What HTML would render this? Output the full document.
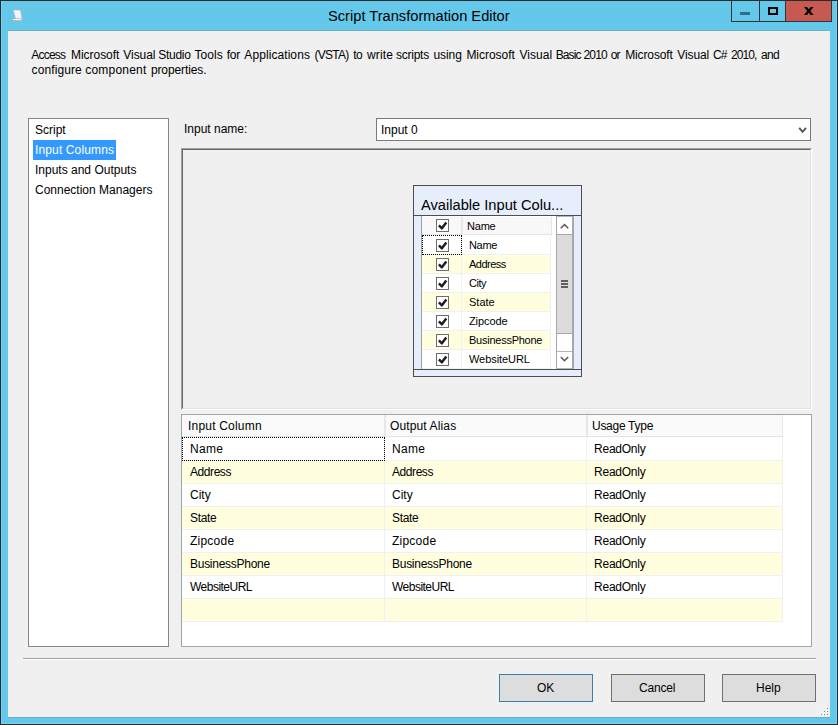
<!DOCTYPE html>
<html><head><meta charset="utf-8">
<style>
*{margin:0;padding:0;box-sizing:border-box}
html,body{width:838px;height:725px;overflow:hidden;background:#64c7e9}
body{position:relative;font-family:"Liberation Sans",sans-serif;font-size:12px;color:#000}
.a{position:absolute}
.t{position:absolute;white-space:nowrap;line-height:normal;font-size:12px}
.s{position:absolute;white-space:nowrap;line-height:normal;font-size:11px}
</style></head><body>
<!-- window frame -->
<div class="a" style="left:0;top:0;width:838px;height:725px;border:1px solid #2b2b2b;background:#64c8ea"></div>
<div class="a" style="left:1px;top:723px;width:836px;height:1px;background:#6fd6f7"></div>
<div class="a" style="left:836px;top:1px;width:1px;height:723px;background:#6fd6f7"></div>
<div class="a" style="left:1px;top:1px;width:1px;height:723px;background:#6fd6f7"></div>
<!-- title icon -->
<svg class="a" style="left:0;top:0" width="30" height="30">
<path d="M13,10 L20.4,10 C21,12.5 21.6,16.5 22.3,20.4 L16,20.4 L15.4,18.6 C14.6,15.2 13.9,12.4 13,10 Z" fill="#f2f2f7" stroke="#a8a8bc" stroke-width="0.5"/>
<path d="M20.2,10 C21,9.5 22.6,9.7 22.8,10.6 C22.8,11.6 21.4,11.8 20.6,11.4 Z" fill="#aeaebe"/>
<rect x="12.6" y="18.8" width="8.6" height="1.8" fill="#f6f6fa" stroke="#9c9cae" stroke-width="0.5"/>
</svg>
<div class="t" style="left:328px;top:8px;font-size:14.67px;color:#000">Script Transformation Editor</div>
<!-- caption buttons -->
<div class="a" style="left:731px;top:0;width:29px;height:22px;border:1px solid #333;border-top:0"></div>
<div class="a" style="left:740px;top:12px;width:10px;height:3px;background:#2f6f85"></div>
<div class="a" style="left:759px;top:0;width:27px;height:22px;border:1px solid #333;border-top:0;border-left:0"></div>
<div class="a" style="left:768px;top:7px;width:10px;height:8px;border:2px solid #000"></div>
<div class="a" style="left:785px;top:1px;width:47px;height:21px;border:1px solid #333;border-top:0;background:#c75a50"></div>
<svg class="a" style="left:800px;top:4px" width="18" height="14"><polygon points="4,3 7,3 13.6,11 10.6,11" fill="#000"/><polygon points="10.6,3 13.6,3 7,11 4,11" fill="#000"/></svg>
<!-- client -->
<div class="a" style="left:8px;top:30px;width:822px;height:1px;background:#6aaec4"></div>
<div class="a" style="left:8px;top:717px;width:822px;height:1px;background:#6aaec4"></div>
<div class="a" style="left:8px;top:31px;width:822px;height:686px;background:#f0f0f0"></div>

<div class="t" style="left:31.2px;top:48px;letter-spacing:-0.76px">Access</div>
<div class="t" style="left:71.0px;top:48px;letter-spacing:-0.04px">Microsoft</div>
<div class="t" style="left:123.3px;top:48px;letter-spacing:-0.06px">Visual</div>
<div class="t" style="left:158.3px;top:48px;letter-spacing:-0.28px">Studio</div>
<div class="t" style="left:194.4px;top:48px;letter-spacing:0.10px">Tools</div>
<div class="t" style="left:226.7px;top:48px;letter-spacing:-0.20px">for</div>
<div class="t" style="left:244.3px;top:48px;letter-spacing:0.08px">Applications</div>
<div class="t" style="left:314.5px;top:48px;letter-spacing:-0.72px">(VSTA)</div>
<div class="t" style="left:353.2px;top:48px;letter-spacing:-0.60px">to</div>
<div class="t" style="left:366.9px;top:48px;letter-spacing:0.20px">write</div>
<div class="t" style="left:396.1px;top:48px;letter-spacing:-0.27px">scripts</div>
<div class="t" style="left:433.4px;top:48px;letter-spacing:-0.05px">using</div>
<div class="t" style="left:466.4px;top:48px;letter-spacing:-0.02px">Microsoft</div>
<div class="t" style="left:519.5px;top:48px;letter-spacing:0.04px">Visual</div>
<div class="t" style="left:555.7px;top:48px;letter-spacing:-0.90px">Basic</div>
<div class="t" style="left:583.6px;top:48px;letter-spacing:-0.90px">2010</div>
<div class="t" style="left:610.8px;top:48px;letter-spacing:-0.90px">or</div>
<div class="t" style="left:625.2px;top:48px;letter-spacing:-0.12px">Microsoft</div>
<div class="t" style="left:677.3px;top:48px;letter-spacing:-0.12px">Visual</div>
<div class="t" style="left:713.0px;top:48px;letter-spacing:-0.90px">C#</div>
<div class="t" style="left:730.9px;top:48px;letter-spacing:-0.90px">2010,</div>
<div class="t" style="left:761.0px;top:48px;letter-spacing:-0.70px">and</div>
<div class="t" style="left:31.6px;top:63px;letter-spacing:0.09px">configure</div>
<div class="t" style="left:85.3px;top:63px;letter-spacing:0.20px">component</div>
<div class="t" style="left:150.9px;top:63px;letter-spacing:-0.11px">properties.</div>

<!-- left list -->
<div class="a" style="left:28px;top:118px;width:141px;height:529px;border:1px solid #828790;background:#fff"></div>
<div class="t" style="left:35px;top:123px">Script</div>
<div class="a" style="left:33px;top:140px;width:83px;height:20px;background:#3399ff"></div>
<div class="t" style="left:35px;top:143px;color:#fff;letter-spacing:0.13px">Input Columns</div>
<div class="t" style="left:35px;top:163px">Inputs and Outputs</div>
<div class="t" style="left:35px;top:183px">Connection Managers</div>

<!-- input name -->
<div class="t" style="left:184px;top:122px">Input name:</div>
<div class="a" style="left:376px;top:118px;width:435px;height:23px;border:1px solid #7a7a7a;background:#fff"></div>
<div class="t" style="left:381px;top:123px">Input 0</div>
<svg class="a" style="left:797px;top:125px" width="12" height="10"><path d="M2.2,2.8 L5.6,6.8 L9,2.8" stroke="#555" stroke-width="1.9" fill="none"/></svg>

<!-- upper panel -->
<div class="a" style="left:181px;top:148px;width:631px;height:262px;background:#f0f0f0;border-style:solid;border-width:1px;border-color:#a0a0a0 #fff #fff #a0a0a0"></div>
<div class="a" style="left:182px;top:149px;width:629px;height:260px;border-style:solid;border-width:1px;border-color:#696969 #e3e3e3 #e3e3e3 #696969"></div>

<!-- available input columns box -->
<div class="a" style="left:413px;top:185px;width:169px;height:192px;border:1px solid #4d4d4d;background:#e6eefc"></div>
<div class="t" style="left:421px;top:197px;font-size:14.67px;color:#000">Available Input Colu...</div>
<div class="a" style="left:413px;top:215px;width:169px;height:1px;background:#4d4d4d"></div>
<div class="a" style="left:413px;top:369px;width:169px;height:1px;background:#4d4d4d"></div>
<div class="a" style="left:421px;top:216px;width:136px;height:153px;background:#fff;border-left:1px solid #a0a0a0"></div>
<div class="a" style="left:422px;top:217px;width:40px;height:18px;background:#f8f8f8;border-right:1px solid #e6e6e6;border-bottom:1px solid #e6e6e6"></div>
<div class="a" style="left:462px;top:217px;width:90px;height:18px;background:#f8f8f8;border-left:1px solid #ececec;border-right:1px solid #e6e6e6;border-bottom:1px solid #e6e6e6"></div>
<div class="s" style="left:467px;top:220px;letter-spacing:-0.2px">Name</div>
<div class="a" style="left:436px;top:219px;width:13px;height:13px;border:1px solid #6d6d6d;background:#fff"></div><svg class="a" style="left:436px;top:219px" width="13" height="13"><path d="M2.9,6.3 L5.9,9.3 L10.3,3.6" stroke="#1e1e1e" stroke-width="2.5" stroke-linejoin="round" fill="none"/></svg>
<div class="a" style="left:422px;top:235px;width:39px;height:19px;background:#fff"></div>
<div class="a" style="left:462px;top:235px;width:88px;height:19px;background:#fff"></div>
<div class="a" style="left:422px;top:254px;width:129px;height:1px;background:#f0f0f0"></div>
<div class="a" style="left:436px;top:239px;width:13px;height:13px;border:1px solid #6d6d6d;background:#fff"></div><svg class="a" style="left:436px;top:239px" width="13" height="13"><path d="M2.9,6.3 L5.9,9.3 L10.3,3.6" stroke="#1e1e1e" stroke-width="2.5" stroke-linejoin="round" fill="none"/></svg>
<div class="s" style="left:469px;top:239px;letter-spacing:-0.33px">Name</div>
<div class="a" style="left:422px;top:255px;width:39px;height:18px;background:#ffffe0"></div>
<div class="a" style="left:462px;top:255px;width:88px;height:18px;background:#ffffe0"></div>
<div class="a" style="left:422px;top:273px;width:129px;height:1px;background:#f0f0f0"></div>
<div class="a" style="left:436px;top:258px;width:13px;height:13px;border:1px solid #6d6d6d;background:#fff"></div><svg class="a" style="left:436px;top:258px" width="13" height="13"><path d="M2.9,6.3 L5.9,9.3 L10.3,3.6" stroke="#1e1e1e" stroke-width="2.5" stroke-linejoin="round" fill="none"/></svg>
<div class="s" style="left:469px;top:258px;letter-spacing:-0.5px">Address</div>
<div class="a" style="left:422px;top:274px;width:39px;height:18px;background:#fff"></div>
<div class="a" style="left:462px;top:274px;width:88px;height:18px;background:#fff"></div>
<div class="a" style="left:422px;top:292px;width:129px;height:1px;background:#f0f0f0"></div>
<div class="a" style="left:436px;top:277px;width:13px;height:13px;border:1px solid #6d6d6d;background:#fff"></div><svg class="a" style="left:436px;top:277px" width="13" height="13"><path d="M2.9,6.3 L5.9,9.3 L10.3,3.6" stroke="#1e1e1e" stroke-width="2.5" stroke-linejoin="round" fill="none"/></svg>
<div class="s" style="left:469px;top:277px;letter-spacing:-0.5px">City</div>
<div class="a" style="left:422px;top:293px;width:39px;height:18px;background:#ffffe0"></div>
<div class="a" style="left:462px;top:293px;width:88px;height:18px;background:#ffffe0"></div>
<div class="a" style="left:422px;top:311px;width:129px;height:1px;background:#f0f0f0"></div>
<div class="a" style="left:436px;top:296px;width:13px;height:13px;border:1px solid #6d6d6d;background:#fff"></div><svg class="a" style="left:436px;top:296px" width="13" height="13"><path d="M2.9,6.3 L5.9,9.3 L10.3,3.6" stroke="#1e1e1e" stroke-width="2.5" stroke-linejoin="round" fill="none"/></svg>
<div class="s" style="left:469px;top:296px;letter-spacing:0px">State</div>
<div class="a" style="left:422px;top:312px;width:39px;height:18px;background:#fff"></div>
<div class="a" style="left:462px;top:312px;width:88px;height:18px;background:#fff"></div>
<div class="a" style="left:422px;top:330px;width:129px;height:1px;background:#f0f0f0"></div>
<div class="a" style="left:436px;top:315px;width:13px;height:13px;border:1px solid #6d6d6d;background:#fff"></div><svg class="a" style="left:436px;top:315px" width="13" height="13"><path d="M2.9,6.3 L5.9,9.3 L10.3,3.6" stroke="#1e1e1e" stroke-width="2.5" stroke-linejoin="round" fill="none"/></svg>
<div class="s" style="left:469px;top:315px;letter-spacing:-0.1px">Zipcode</div>
<div class="a" style="left:422px;top:331px;width:39px;height:18px;background:#ffffe0"></div>
<div class="a" style="left:462px;top:331px;width:88px;height:18px;background:#ffffe0"></div>
<div class="a" style="left:422px;top:349px;width:129px;height:1px;background:#f0f0f0"></div>
<div class="a" style="left:436px;top:334px;width:13px;height:13px;border:1px solid #6d6d6d;background:#fff"></div><svg class="a" style="left:436px;top:334px" width="13" height="13"><path d="M2.9,6.3 L5.9,9.3 L10.3,3.6" stroke="#1e1e1e" stroke-width="2.5" stroke-linejoin="round" fill="none"/></svg>
<div class="s" style="left:469px;top:334px;letter-spacing:-0.25px">BusinessPhone</div>
<div class="a" style="left:422px;top:350px;width:39px;height:18px;background:#fff"></div>
<div class="a" style="left:462px;top:350px;width:88px;height:18px;background:#fff"></div>
<div class="a" style="left:422px;top:368px;width:129px;height:1px;background:#f0f0f0"></div>
<div class="a" style="left:436px;top:353px;width:13px;height:13px;border:1px solid #6d6d6d;background:#fff"></div><svg class="a" style="left:436px;top:353px" width="13" height="13"><path d="M2.9,6.3 L5.9,9.3 L10.3,3.6" stroke="#1e1e1e" stroke-width="2.5" stroke-linejoin="round" fill="none"/></svg>
<div class="s" style="left:469px;top:353px;letter-spacing:-0.07px">WebsiteURL</div>
<div class="a" style="left:461px;top:235px;width:1px;height:134px;background:#f0f0f0"></div>
<div class="a" style="left:550px;top:235px;width:1px;height:134px;background:#f0f0f0"></div>
<div class="a" style="left:422px;top:235px;width:40px;height:20px;border:1px dotted #000"></div>
<div class="a" style="left:556px;top:216px;width:18px;height:153px;background:#fff;border-left:1px solid #a8a8a8;border-top:1px solid #b4b4b4;border-right:2px solid #a8a8a8;border-bottom:1px solid #b4b4b4"></div>
<svg class="a" style="left:557px;top:217px" width="15" height="16"><path d="M3.8,11.2 L7.5,7.5 L11.2,11.2" stroke="#555" stroke-width="1.5" fill="none"/></svg>
<div class="a" style="left:557px;top:234px;width:15px;height:100px;background:#dcdcdc;border-top:1px solid #a8a8a8;border-bottom:1px solid #a8a8a8"></div>
<div class="a" style="left:561px;top:280px;width:7px;height:2px;background:#606060"></div>
<div class="a" style="left:561px;top:283px;width:7px;height:2px;background:#606060"></div>
<div class="a" style="left:561px;top:286px;width:7px;height:2px;background:#606060"></div>
<div class="a" style="left:557px;top:351px;width:15px;height:1px;background:#b4b4b4"></div>
<svg class="a" style="left:557px;top:352px" width="15" height="16"><path d="M3.8,5 L7.5,8.7 L11.2,5" stroke="#555" stroke-width="1.5" fill="none"/></svg>
<!-- lower grid -->
<div class="a" style="left:181px;top:414px;width:631px;height:233px;border:1px solid #a0a4ac;background:#fff"></div>
<div class="a" style="left:182px;top:415px;width:601px;height:22px;background:#fafafa;border-bottom:1px solid #e3e3e3"></div>
<div class="a" style="left:384px;top:415px;width:2px;height:21px;background:#e8e8e8"></div>
<div class="a" style="left:586px;top:415px;width:2px;height:21px;background:#e8e8e8"></div>
<div class="a" style="left:782px;top:415px;width:1px;height:21px;background:#e8e8e8"></div>
<div class="t" style="left:188px;top:419px;letter-spacing:0.2px">Input Column</div>
<div class="t" style="left:390px;top:419px;letter-spacing:0.13px">Output Alias</div>
<div class="t" style="left:592px;top:419px;letter-spacing:-0.28px">Usage Type</div>
<div class="a" style="left:182px;top:437px;width:601px;height:23px;background:#fff"></div>
<div class="a" style="left:182px;top:460px;width:601px;height:1px;background:#f0f0f0"></div>
<div class="t" style="left:190px;top:442px;letter-spacing:0.3px">Name</div>
<div class="t" style="left:392px;top:442px;letter-spacing:0.3px">Name</div>
<div class="t" style="left:594px;top:442px;letter-spacing:-0.23px">ReadOnly</div>
<div class="a" style="left:182px;top:461px;width:601px;height:22px;background:#ffffe0"></div>
<div class="a" style="left:182px;top:483px;width:601px;height:1px;background:#f0f0f0"></div>
<div class="t" style="left:190px;top:465px;letter-spacing:-0.43px">Address</div>
<div class="t" style="left:392px;top:465px;letter-spacing:-0.43px">Address</div>
<div class="t" style="left:594px;top:465px;letter-spacing:-0.23px">ReadOnly</div>
<div class="a" style="left:182px;top:484px;width:601px;height:22px;background:#fff"></div>
<div class="a" style="left:182px;top:506px;width:601px;height:1px;background:#f0f0f0"></div>
<div class="t" style="left:190px;top:488px;letter-spacing:0px">City</div>
<div class="t" style="left:392px;top:488px;letter-spacing:0px">City</div>
<div class="t" style="left:594px;top:488px;letter-spacing:-0.23px">ReadOnly</div>
<div class="a" style="left:182px;top:507px;width:601px;height:22px;background:#ffffe0"></div>
<div class="a" style="left:182px;top:529px;width:601px;height:1px;background:#f0f0f0"></div>
<div class="t" style="left:190px;top:511px;letter-spacing:-0.35px">State</div>
<div class="t" style="left:392px;top:511px;letter-spacing:-0.35px">State</div>
<div class="t" style="left:594px;top:511px;letter-spacing:-0.23px">ReadOnly</div>
<div class="a" style="left:182px;top:530px;width:601px;height:22px;background:#fff"></div>
<div class="a" style="left:182px;top:552px;width:601px;height:1px;background:#f0f0f0"></div>
<div class="t" style="left:190px;top:534px;letter-spacing:0.23px">Zipcode</div>
<div class="t" style="left:392px;top:534px;letter-spacing:0.23px">Zipcode</div>
<div class="t" style="left:594px;top:534px;letter-spacing:-0.23px">ReadOnly</div>
<div class="a" style="left:182px;top:553px;width:601px;height:22px;background:#ffffe0"></div>
<div class="a" style="left:182px;top:575px;width:601px;height:1px;background:#f0f0f0"></div>
<div class="t" style="left:190px;top:557px;letter-spacing:-0.27px">BusinessPhone</div>
<div class="t" style="left:392px;top:557px;letter-spacing:-0.27px">BusinessPhone</div>
<div class="t" style="left:594px;top:557px;letter-spacing:-0.23px">ReadOnly</div>
<div class="a" style="left:182px;top:576px;width:601px;height:22px;background:#fff"></div>
<div class="a" style="left:182px;top:598px;width:601px;height:1px;background:#f0f0f0"></div>
<div class="t" style="left:190px;top:580px;letter-spacing:-0.52px">WebsiteURL</div>
<div class="t" style="left:392px;top:580px;letter-spacing:-0.52px">WebsiteURL</div>
<div class="t" style="left:594px;top:580px;letter-spacing:-0.23px">ReadOnly</div>
<div class="a" style="left:182px;top:599px;width:601px;height:22px;background:#ffffe0"></div>
<div class="a" style="left:182px;top:621px;width:601px;height:1px;background:#f0f0f0"></div>
<div class="a" style="left:384px;top:437px;width:1px;height:185px;background:#f0f0f0"></div>
<div class="a" style="left:586px;top:437px;width:1px;height:185px;background:#f0f0f0"></div>
<div class="a" style="left:782px;top:437px;width:1px;height:185px;background:#f0f0f0"></div>
<div class="a" style="left:182px;top:437px;width:203px;height:24px;border:1px dotted #000"></div>

<!-- separator -->
<div class="a" style="left:23px;top:658px;width:793px;height:1px;background:#a0a0a0"></div>
<div class="a" style="left:23px;top:659px;width:793px;height:1px;background:#fff"></div>

<!-- buttons -->
<div class="a" style="left:499px;top:674px;width:94px;height:28px;border:1px solid #3c7fb1;background:#dddddd"></div>
<div class="t" style="left:537px;top:681px">OK</div>
<div class="a" style="left:611px;top:674px;width:94px;height:28px;border:1px solid #707070;background:#dddddd"></div>
<div class="t" style="left:639px;top:681px;letter-spacing:-0.2px">Cancel</div>
<div class="a" style="left:722px;top:674px;width:94px;height:28px;border:1px solid #707070;background:#dddddd"></div>
<div class="t" style="left:756px;top:681px">Help</div>

<!-- grip -->
<div class="a" style="left:826px;top:707px;width:1px;height:1px;background:#fff"></div><div class="a" style="left:827px;top:708px;width:1px;height:1px;background:#808080"></div>
<div class="a" style="left:823px;top:710px;width:1px;height:1px;background:#fff"></div><div class="a" style="left:824px;top:711px;width:1px;height:1px;background:#808080"></div>
<div class="a" style="left:826px;top:710px;width:1px;height:1px;background:#fff"></div><div class="a" style="left:827px;top:711px;width:1px;height:1px;background:#808080"></div>
<div class="a" style="left:820px;top:713px;width:1px;height:1px;background:#fff"></div><div class="a" style="left:821px;top:714px;width:1px;height:1px;background:#808080"></div>
<div class="a" style="left:823px;top:713px;width:1px;height:1px;background:#fff"></div><div class="a" style="left:824px;top:714px;width:1px;height:1px;background:#808080"></div>
<div class="a" style="left:826px;top:713px;width:1px;height:1px;background:#fff"></div><div class="a" style="left:827px;top:714px;width:1px;height:1px;background:#808080"></div>
</body></html>
